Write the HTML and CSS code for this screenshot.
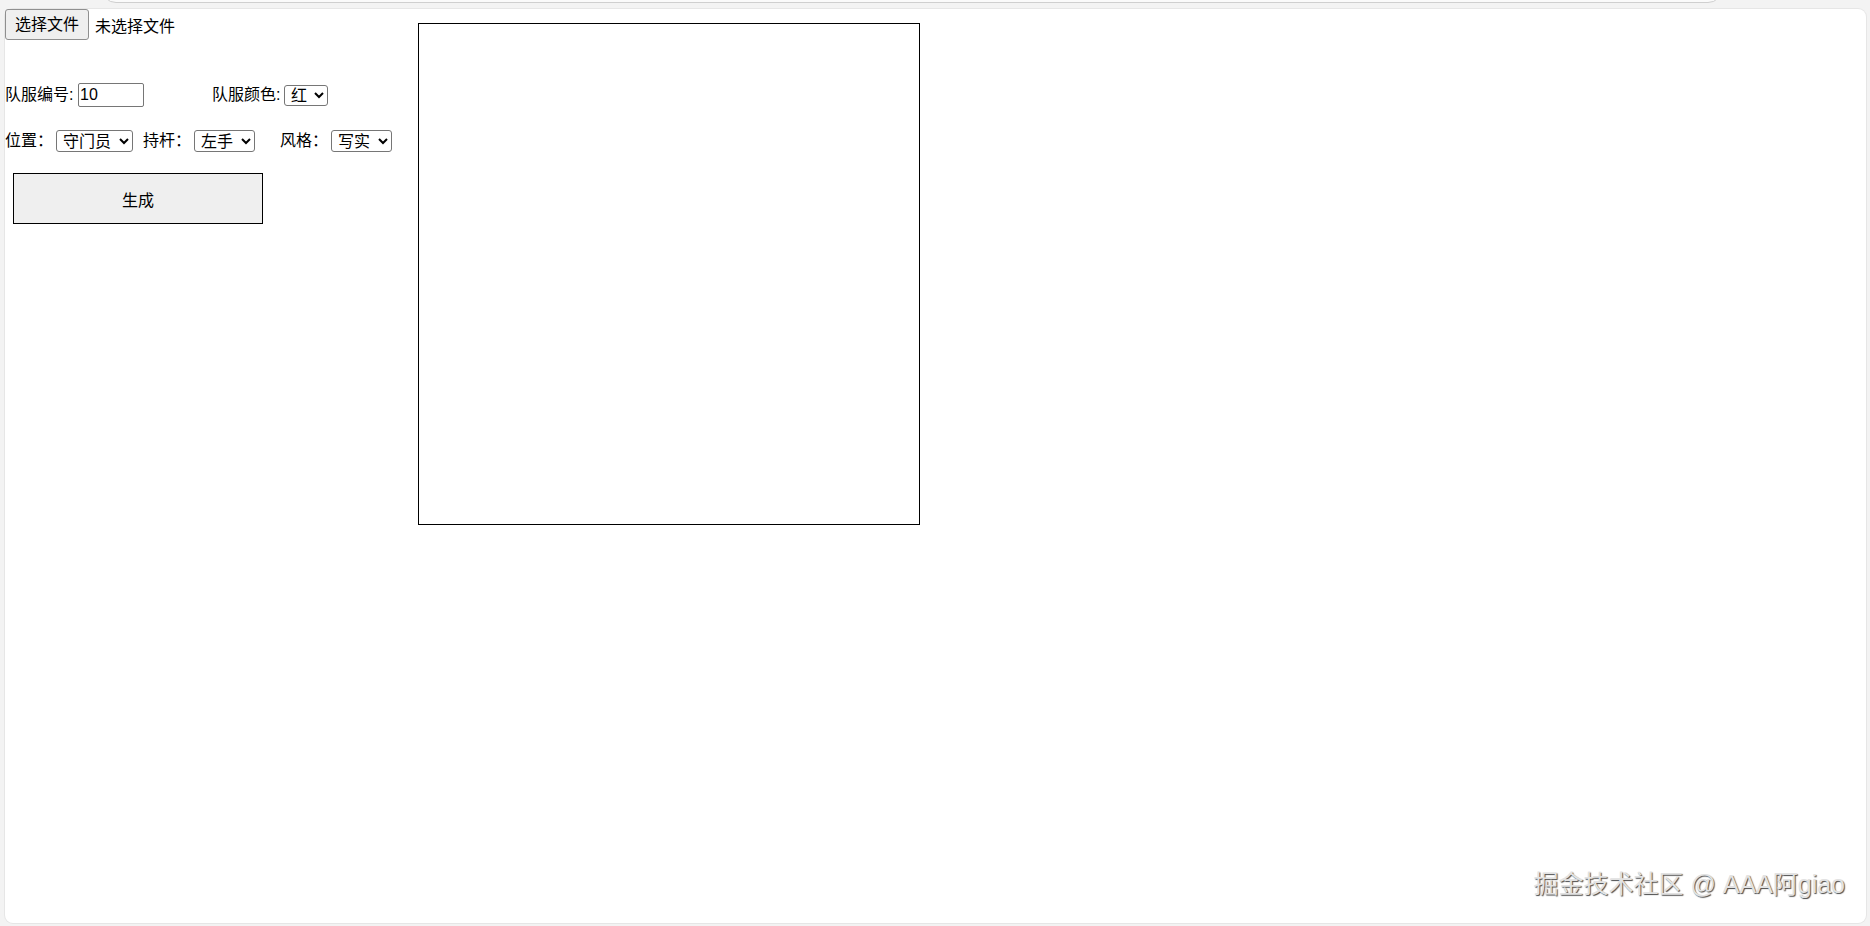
FILE: index.html
```html
<!DOCTYPE html>
<html lang="zh">
<head>
    <meta charset="UTF-8">
    <title>球员卡生成</title>
    <link rel="stylesheet" href="styles.css">
</head>
<body>
    <div class="chrome"><div class="urlbar"></div></div>
    <div class="page">
        <div class="layout">
            <div class="controls">
                <div class="file-row">
                    <button class="file-btn">选择文件</button>
                    <span class="file-name">未选择文件</span>
                </div>
                <div class="row row-jersey">
                    <label class="lbl lbl-num">队服编号:</label>
                    <input class="num" type="text" value="10">
                    <label class="lbl lbl-color">队服颜色:</label>
                    <select class="sel sel-color"><option>红</option></select>
                </div>
                <div class="row row-opts">
                    <label class="lbl">位置：</label>
                    <select class="sel sel-pos"><option>守门员</option></select>
                    <label class="lbl lbl-hand">持杆：</label>
                    <select class="sel sel-hand"><option>左手</option></select>
                    <label class="lbl lbl-style">风格：</label>
                    <select class="sel sel-style"><option>写实</option></select>
                </div>
                <button class="gen-btn">生成</button>
            </div>
            <div class="canvas"></div>
        </div>
        <div class="watermark">掘金技术社区 @ AAA阿giao</div>
    </div>
</body>
</html>
```

FILE: styles.css
```css
html, body {
    margin: 0;
    height: 100%;
}
body {
    background: #f3f3f3;
    font-family: "Liberation Sans", "Noto Sans CJK SC", sans-serif;
    font-size: 16px;
    color: #000;
    padding: 0 4px 0 5px;
    box-sizing: border-box;
    overflow: hidden;
}
.chrome {
    height: 9px;
    overflow: hidden;
}
.urlbar {
    height: 30px;
    margin: -27px 0 0 96px;
    width: 1622px;
    background: #fafafa;
    border: 1px solid #cfcfcf;
    border-radius: 16px;
    box-sizing: border-box;
}
.page {
    position: relative;
    height: 914px;
    background: #fff;
    border-radius: 8px;
    box-shadow: 0 0 0 1px #e6e6e6;
}
.layout {
    display: flex;
    align-items: flex-start;
}
.controls {
    width: 413px;
    flex: none;
}
.file-row {
    display: flex;
    align-items: center;
    height: 31px;
}
.file-btn {
    height: 31px;
    padding: 0 9px;
    font: inherit;
    line-height: 1;
    background: #efefef;
    border: 1px solid #8f8f8f;
    border-radius: 3px;
    color: #000;
}
.file-name {
    margin-left: 6px;
}
.row {
    display: flex;
    align-items: center;
}
.lbl {
    line-height: 1;
}
.row-jersey {
    height: 24px;
    margin-top: 43px;
}
.lbl-num {
    width: 73px;
}
.num {
    width: 66px;
    height: 24px;
    box-sizing: border-box;
    padding: 1px 1px;
    font: inherit;
    border: 1px solid #767676;
    border-radius: 2px;
}
.lbl-color {
    margin-left: 68px;
    width: 72px;
}
.row-opts {
    height: 22px;
    margin-top: 23px;
}
.row-opts .lbl {
    width: 48px;
    margin-right: 3px;
}
.sel {
    height: 22px;
    box-sizing: border-box;
    font: inherit;
    padding: 0 0 0 2px;
    border: 1px solid #767676;
    border-radius: 3px;
    background: #fff;
    color: #000;
}
.row-jersey .sel {
    height: 21px;
}
.sel-color { width: 44px; }
.sel-pos { width: 77px; }
.sel-hand { width: 61px; }
.sel-style { width: 61px; }
.lbl-hand { margin-left: 10px; }
.lbl-style { margin-left: 25px; }
.gen-btn {
    display: block;
    width: 250px;
    height: 51px;
    margin: 21px 0 0 8px;
    font: inherit;
    background: #efefef;
    border: 1px solid #000;
    border-radius: 0;
    color: #000;
}
.canvas {
    width: 500px;
    height: 500px;
    margin-top: 14px;
    border: 1px solid #000;
    flex: none;
}
.watermark {
    position: absolute;
    right: 21px;
    bottom: 26px;
    font-size: 25px;
    line-height: 1;
    color: #e2e2e2;
    text-shadow: 1px 1px 1px #4a4a4a, -1px -1px 0 #fff;
    white-space: nowrap;
}
```
